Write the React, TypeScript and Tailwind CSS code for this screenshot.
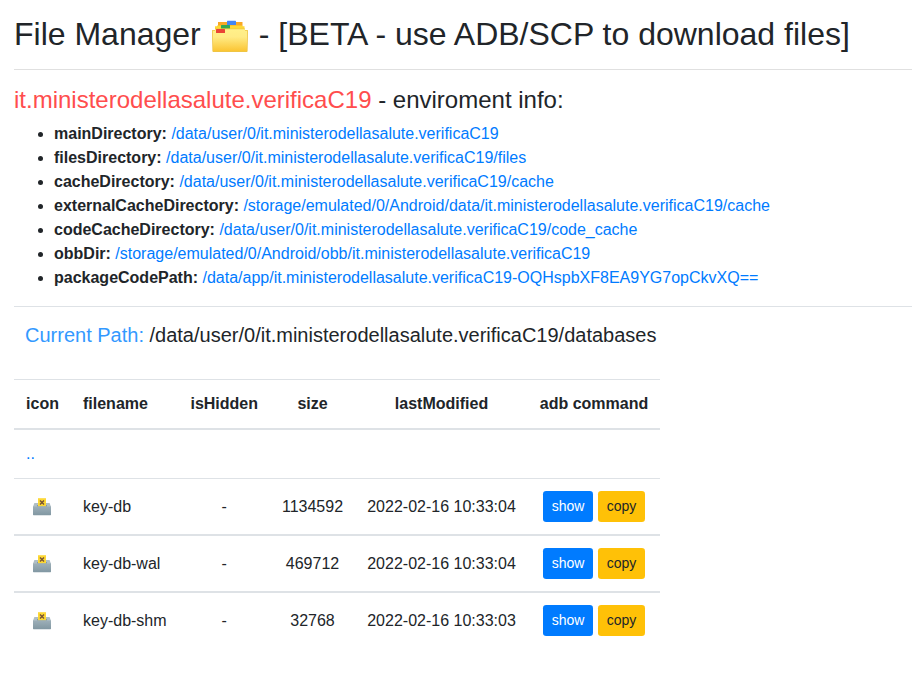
const info = [
  ["mainDirectory:", "/data/user/0/it.ministerodellasalute.verificaC19"],
  ["filesDirectory:", "/data/user/0/it.ministerodellasalute.verificaC19/files"],
  ["cacheDirectory:", "/data/user/0/it.ministerodellasalute.verificaC19/cache"],
  ["externalCacheDirectory:", "/storage/emulated/0/Android/data/it.ministerodellasalute.verificaC19/cache"],
  ["codeCacheDirectory:", "/data/user/0/it.ministerodellasalute.verificaC19/code_cache"],
  ["obbDir:", "/storage/emulated/0/Android/obb/it.ministerodellasalute.verificaC19"],
  ["packageCodePath:", "/data/app/it.ministerodellasalute.verificaC19-OQHspbXF8EA9YG7opCkvXQ=="],
];

const files = [
  { name: "key-db", size: "1134592", modified: "2022-02-16 10:33:04" },
  { name: "key-db-wal", size: "469712", modified: "2022-02-16 10:33:04" },
  { name: "key-db-shm", size: "32768", modified: "2022-02-16 10:33:03" },
];

function DividersIcon() {
  return (
    <svg viewBox="0 0 36 32" className="mx-[11px] mt-[6px] h-8 w-9 shrink-0">
      <defs>
        <linearGradient id="folder" x1="0" y1="0" x2="0" y2="1">
          <stop offset="0" stopColor="#fff08a" />
          <stop offset="0.35" stopColor="#ffeb85" />
          <stop offset="1" stopColor="#fbc534" />
        </linearGradient>
      </defs>
      <path d="M6 2h24.5v8H6z" fill="#f9a825" />
      <rect x="15" y="0.8" width="9" height="4.2" rx="0.5" fill="#4285f4" />
      <path d="M5 5.5h25v.8h2.5v7H3v-7h2z" fill="#fdd835" />
      <rect x="9" y="4.9" width="9" height="3.8" rx="0.5" fill="#34a853" />
      <path d="M.6 10H3V8.5h30V10h2.4q.6 0 .6.8L35.6 31q0 1-1 1H1.4q-1 0-1-1L0 10.8q0-.8.6-.8z" fill="#efc544" />
      <path d="M.8 10.7H3V9.3h30v1.4h2.2L34.8 31H1.2z" fill="url(#folder)" />
      <rect x="4" y="9" width="9" height="4" rx="0.5" fill="#ea4335" />
    </svg>
  );
}

function BallotIcon() {
  return (
    <svg viewBox="0 0 18 18" className="h-[18px] w-[18px]">
      <defs>
        <linearGradient id="ballot" x1="0" y1="0" x2="0" y2="1">
          <stop offset="0" stopColor="#9eb0b9" />
          <stop offset="1" stopColor="#8197a2" />
        </linearGradient>
      </defs>
      <path d="M1.4 5h15.2L18 8.8H0z" fill="#b0bec5" />
      <path d="M4 7.2h10v1.6H4z" fill="#78909c" />
      <path d="M5 .2h8v8.4H5z" fill="#fdd835" />
      <path d="M7 2.6l4 4m0-4l-4 4" stroke="#775334" strokeWidth="1.4" />
      <path d="M0 8.2h18v8.4q0 .6-.6.6H.6q-.6 0-.6-.6z" fill="url(#ballot)" />
    </svg>
  );
}

export default function App() {
  return (
    <div className="h-[682px] overflow-hidden bg-white pl-[14px] pt-[14px] font-['Liberation_Sans',Arial,sans-serif] text-base text-[#212529]">
      <h2 className="flex h-[39px] whitespace-pre text-[32px] leading-[40px]">
        <span>File Manager</span>
        <DividersIcon />
        <span>- [BETA - use ADB/SCP to download files]</span>
      </h2>
      <hr className="mb-4 mt-4 border-t border-[#e0e0e0]" />
      <h4 className="mb-2 text-2xl leading-7">
        <span className="text-[#ff4d4d]">it.ministerodellasalute.verificaC19</span> - enviroment info:
      </h4>
      <ul className="list-disc pl-10">
        {info.map(([label, path]) => (
          <li key={label} className="whitespace-nowrap leading-6">
            <b>{label}</b> <a className="text-[#007bff]">{path}</a>
          </li>
        ))}
      </ul>
      <hr className="my-4 border-t border-[#dee2e6]" />
      <h5 className="mb-8 ml-[11px] h-6 whitespace-nowrap text-xl leading-6">
        <span className="text-[#3399ff]">Current Path:</span> /data/user/0/it.ministerodellasalute.verificaC19/databases
      </h5>
      <table className="w-[646px] table-fixed border-separate border-spacing-0 text-center leading-6">
        <colgroup>
          <col className="w-[57px]" />
          <col className="w-[107.5px]" />
          <col className="w-[91.5px]" />
          <col className="w-[85px]" />
          <col className="w-[173px]" />
          <col className="w-[132px]" />
        </colgroup>
        <thead>
          <tr className="h-[51px] *:border-b-2 *:border-t *:border-[#dee2e6] *:p-0 *:font-bold">
            <th>icon</th>
            <th className="text-left"><span className="pl-3">filename</span></th>
            <th>isHidden</th>
            <th>size</th>
            <th>lastModified</th>
            <th>adb command</th>
          </tr>
        </thead>
        <tbody>
          <tr>
            <td colSpan={6} className="h-12 px-3 text-left"><a className="text-[#007bff]">..</a></td>
          </tr>
          {files.map((file, i) => (
            <tr key={file.name} className={i === 0 ? "h-14 *:border-t *:border-[#dee2e6]" : "h-[57px] *:border-t-2 *:border-[#dee2e6]"}>
              <td><div className="flex justify-center pr-[2px] pt-px"><BallotIcon /></div></td>
              <td className="pl-3 text-left">{file.name}</td>
              <td>-</td>
              <td>{file.size}</td>
              <td>{file.modified}</td>
              <td>
                <div className="flex justify-center gap-[5px] text-sm leading-[21px]">
                  <button className="h-[31px] w-[50px] rounded-[3.2px] bg-[#007bff] text-white">show</button>
                  <button className="h-[31px] w-[47px] rounded-[3.2px] bg-[#ffc107]">copy</button>
                </div>
              </td>
            </tr>
          ))}
        </tbody>
      </table>
    </div>
  );
}
